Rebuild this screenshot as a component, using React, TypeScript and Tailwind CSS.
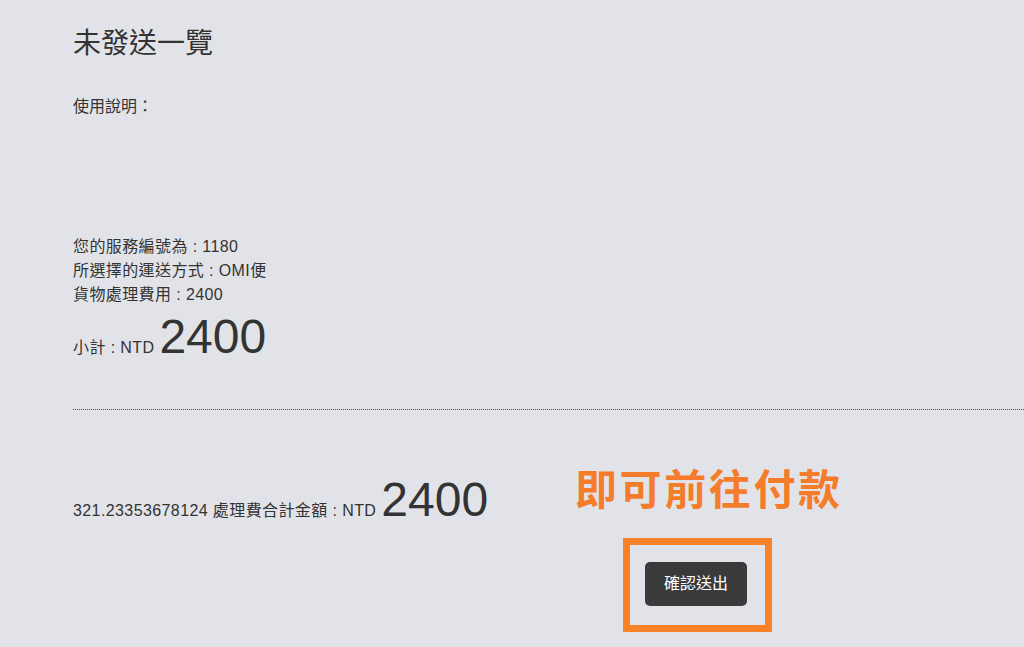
const font = "font-['Liberation_Sans','Noto_Sans_CJK_TC',sans-serif]"

function Row({ label, value }: { label: string; value: string }) {
    return (
        <p className="leading-6">
            {label} : {value}
        </p>
    )
}

export default function App() {
    return (
        <div className={`min-h-[647px] bg-[#e2e3e8] text-[#333333] ${font} overflow-hidden`}>
            <div className="pl-[73px] pt-[26px]">
                <h1 className="text-[28px] leading-9 text-[#333333]">未發送一覽</h1>
                <p className="mt-[33px] text-[16px] leading-6">使用說明：</p>

                <div className="mt-[116px] text-[16px] tracking-[0.4px]">
                    <Row label="您的服務編號為" value="1180" />
                    <Row label="所選擇的運送方式" value="OMI便" />
                    <Row label="貨物處理費用" value="2400" />
                    <p className="flex items-baseline mt-[2px]">
                        <span>小計 : NTD</span>
                        <span className="ml-[5px] text-[48px] leading-[56px] tracking-normal">2400</span>
                    </p>
                </div>

                <div className="mt-[44px] border-t border-dotted border-[#555555]" />

                <div className="flex mt-[62px]">
                    <p className="flex items-baseline text-[16px] tracking-[0.4px] w-[505px]">
                        <span>321.23353678124 處理費合計金額 : NTD</span>
                        <span className="ml-[5px] text-[48px] leading-[56px] tracking-normal">2400</span>
                    </p>
                    <div className="relative">
                        <p className="absolute left-[-3px] top-[-6px] whitespace-nowrap text-[42px] font-bold leading-[50px] tracking-[2.6px] text-[#f47c2a]">
                            即可前往付款
                        </p>
                    </div>
                </div>

                <div className="flex mt-[34px] pl-[572px]">
                    <div className="relative">
                        <button className="h-[44px] w-[102px] rounded-[5px] bg-[#3a3a3a] text-[16px] text-white">
                            確認送出
                        </button>
                        <div className="absolute left-[-22px] top-[-24px] h-[94px] w-[149px] border-[7px] border-[#f98127]" />
                    </div>
                </div>
            </div>
        </div>
    )
}
